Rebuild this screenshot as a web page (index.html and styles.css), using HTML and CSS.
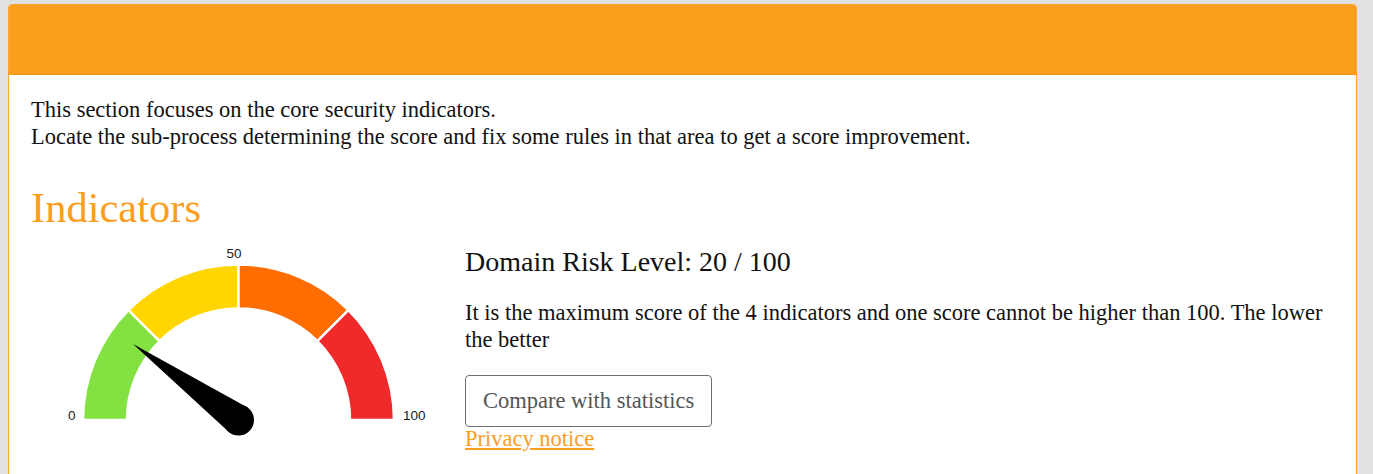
FILE: index.html
```html
<!DOCTYPE html>
<html lang="en">
<head>
<meta charset="utf-8">
<title>Indicators</title>
<link rel="stylesheet" href="styles.css">
</head>
<body>
<div class="page">
  <section class="card">
    <div class="card-header"></div>
    <div class="card-body">
      <p class="intro">This section focuses on the core security indicators.<br>Locate the sub-process determining the score and fix some rules in that area to get a score improvement.</p>
      <h2 class="section-title">Indicators</h2>
      <div class="indicator-row">
        <svg class="gauge" width="410" height="200" viewBox="0 0 410 200" xmlns="http://www.w3.org/2000/svg">
          <g stroke="#ffffff" stroke-width="2.5" stroke-linejoin="miter">
            <path fill="#84e142" d="M52 179 A155.5 155.5 0 0 1 97.54 69.04 L128.66 100.16 A111.5 111.5 0 0 0 96 179 Z"/>
            <path fill="#ffd600" d="M97.54 69.04 A155.5 155.5 0 0 1 207.5 23.5 L207.5 67.5 A111.5 111.5 0 0 0 128.66 100.16 Z"/>
            <path fill="#ff6c00" d="M207.5 23.5 A155.5 155.5 0 0 1 317.46 69.04 L286.34 100.16 A111.5 111.5 0 0 0 207.5 67.5 Z"/>
            <path fill="#f0292b" d="M317.46 69.04 A155.5 155.5 0 0 1 363 179 L319 179 A111.5 111.5 0 0 0 286.34 100.16 Z"/>
          </g>
          <rect x="40" y="179" width="340" height="4" fill="#ffffff"/>
          <g fill="#000000">
            <polygon points="102,103 216.56,166.42 198.44,191.58"/>
            <circle cx="207.5" cy="179" r="15.5"/>
          </g>
          <g class="gauge-label" font-family="'Liberation Sans', Arial, sans-serif" font-size="13.5" fill="#222">
            <text x="203" y="17" text-anchor="middle">50</text>
            <text x="37" y="179">0</text>
            <text x="372" y="179">100</text>
          </g>
        </svg>
        <div class="indicator-info">
          <h3 class="risk-title">Domain Risk Level: 20 / 100</h3>
          <p class="risk-text">It is the maximum score of the 4 indicators and one score cannot be higher than 100. The lower the better</p>
          <button class="btn-compare" type="button">Compare with statistics</button>
          <a class="privacy-link" href="#">Privacy notice</a>
        </div>
      </div>
    </div>
  </section>
</div>
</body>
</html>
```

FILE: styles.css
```css
html, body {
  margin: 0;
  padding: 0;
}

body {
  background: #e1e1e1;
  font-family: "Liberation Serif", "Times New Roman", serif;
  font-size: 22.5px;
  line-height: 27px;
  color: #111;
  overflow: hidden;
}

.page {
  padding: 4px 16px 0 8px;
}

.card {
  background: #ffffff;
  border: 1px solid #f9a430;
  border-radius: 4px;
  overflow: hidden;
  min-height: 600px;
}

.card-header {
  height: 69px;
  background: #fb9e1e;
  border-bottom: 1px solid #ef951c;
}

.card-body {
  padding: 21px 22px 0 22px;
}

.intro {
  margin: 0;
}

.section-title {
  margin: 32px 0 0 0;
  font-weight: normal;
  font-size: 42.5px;
  line-height: 51px;
  color: #fb9e1e;
}

.indicator-row {
  display: flex;
  gap: 24px;
  margin-top: 8px;
}

.gauge {
  flex: 0 0 auto;
  display: block;
}

.indicator-info {
  flex: 1 1 auto;
  display: flex;
  flex-direction: column;
  align-items: flex-start;
  padding-top: 5px;
}

.risk-title {
  margin: 0;
  font-weight: normal;
  font-size: 28px;
  line-height: 32px;
}

.risk-text {
  margin: 21px 0 0 0;
}

.btn-compare {
  margin-top: 22px;
  height: 52px;
  padding: 0 17px;
  background: #ffffff;
  border: 1px solid #6f6f6f;
  border-radius: 4px;
  font-family: "Liberation Serif", "Times New Roman", serif;
  font-size: 22.5px;
  color: #555;
}

.privacy-link {
  color: #fb9e1e;
  text-decoration: underline;
  line-height: 24px;
}
```
